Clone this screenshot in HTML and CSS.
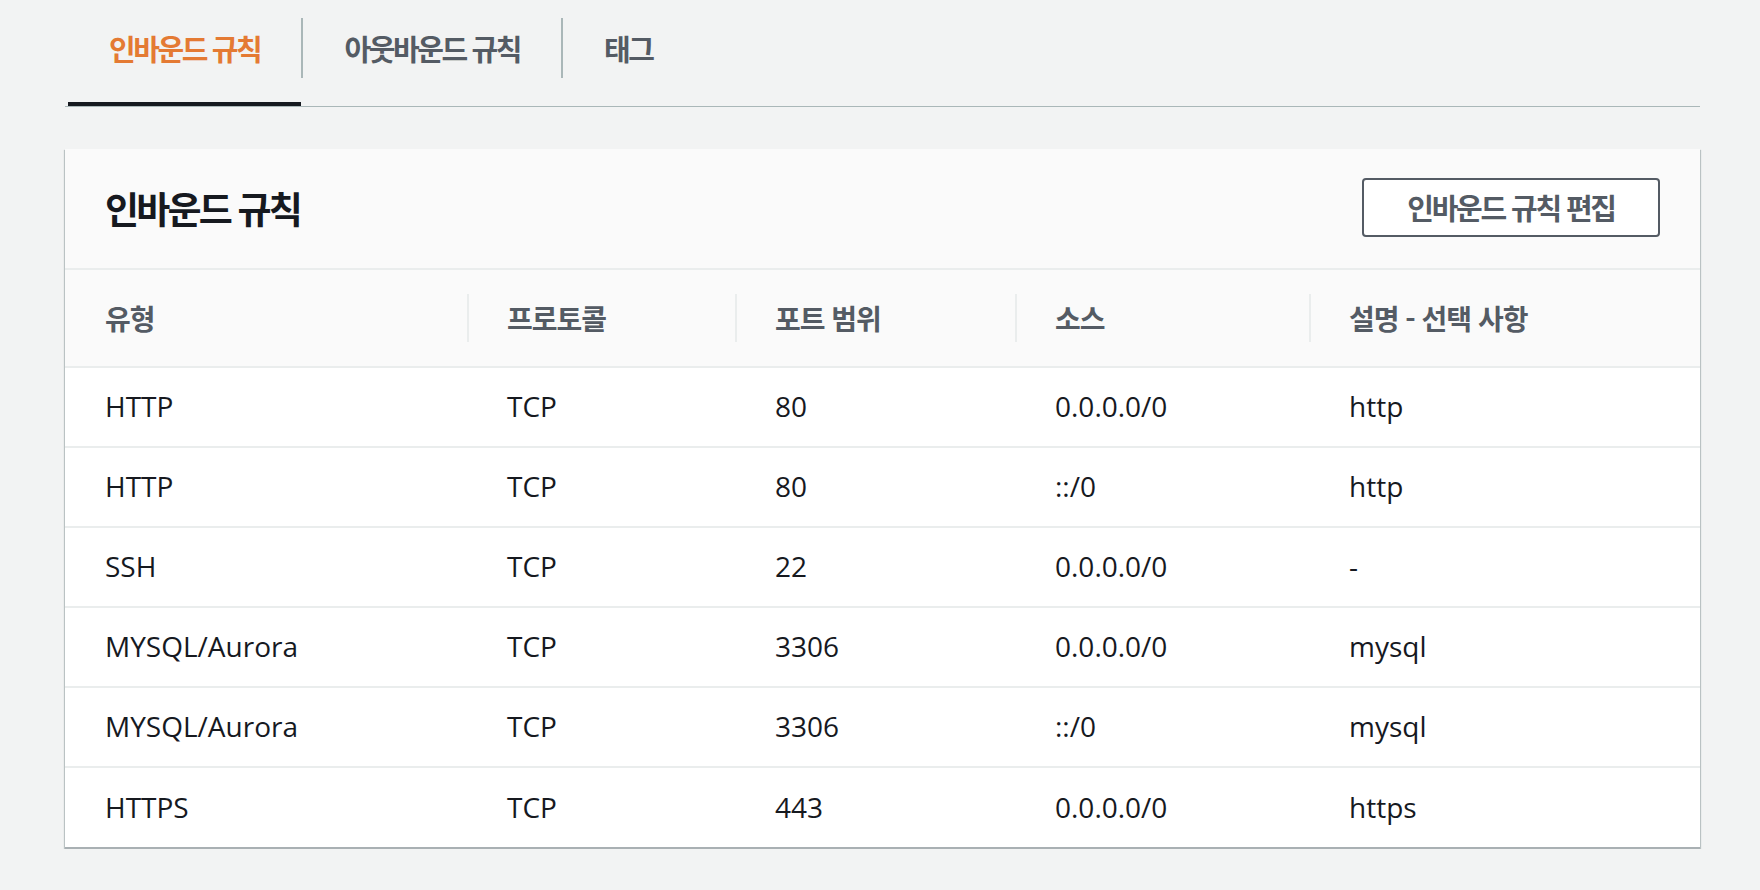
FILE: index.html
```html
<!DOCTYPE html>
<html lang="ko">
<head>
<meta charset="utf-8">
<title>인바운드 규칙</title>
<link rel="stylesheet" href="styles.css">
</head>
<body>
<div class="page">
  <nav class="tabs">
    <div class="tab active"><span class="tab-label">인바운드 규칙</span></div>
    <div class="tab"><span class="tab-label sep">아웃바운드 규칙</span></div>
    <div class="tab"><span class="tab-label sep">태그</span></div>
  </nav>

  <section class="card">
    <header class="card-header">
      <h2 class="card-title">인바운드 규칙</h2>
      <button class="btn">인바운드 규칙 편집</button>
    </header>
    <div class="table">
      <div class="row head">
        <div class="cell">유형</div>
        <div class="cell">프로토콜</div>
        <div class="cell">포트 범위</div>
        <div class="cell">소스</div>
        <div class="cell">설명 - 선택 사항</div>
      </div>
      <div class="row">
        <div class="cell">HTTP</div>
        <div class="cell">TCP</div>
        <div class="cell">80</div>
        <div class="cell">0.0.0.0/0</div>
        <div class="cell">http</div>
      </div>
      <div class="row">
        <div class="cell">HTTP</div>
        <div class="cell">TCP</div>
        <div class="cell">80</div>
        <div class="cell">::/0</div>
        <div class="cell">http</div>
      </div>
      <div class="row">
        <div class="cell">SSH</div>
        <div class="cell">TCP</div>
        <div class="cell">22</div>
        <div class="cell">0.0.0.0/0</div>
        <div class="cell">-</div>
      </div>
      <div class="row">
        <div class="cell">MYSQL/Aurora</div>
        <div class="cell">TCP</div>
        <div class="cell">3306</div>
        <div class="cell">0.0.0.0/0</div>
        <div class="cell">mysql</div>
      </div>
      <div class="row">
        <div class="cell">MYSQL/Aurora</div>
        <div class="cell">TCP</div>
        <div class="cell">3306</div>
        <div class="cell">::/0</div>
        <div class="cell">mysql</div>
      </div>
      <div class="row">
        <div class="cell">HTTPS</div>
        <div class="cell">TCP</div>
        <div class="cell">443</div>
        <div class="cell">0.0.0.0/0</div>
        <div class="cell">https</div>
      </div>
    </div>
  </section>
</div>
</body>
</html>
```

FILE: styles.css
```css
html, body {
  margin: 0;
  padding: 0;
  background: #f2f3f3;
  font-family: "Open Sans", "Noto Sans CJK KR", sans-serif;
}

.page {
  padding: 0 60px 0 65px;
}

/* Tabs */
.tabs {
  display: flex;
  padding-left: 3px;
  border-bottom: 1px solid #aab7b8;
}

.tab {
  height: 106px;
  box-sizing: border-box;
  padding-top: 18px;
  border-bottom: 4px solid transparent;
}

.tab.active {
  border-bottom-color: #16191f;
}

.tab-label {
  display: flex;
  align-items: center;
  height: 60px;
  padding: 0 41px;
  font: 700 29px/1 "Noto Sans CJK KR", sans-serif;
  letter-spacing: -2.4px;
  color: #545b64;
}

.tab.active .tab-label {
  color: #e47a33;
}

.tab-label.sep {
  border-left: 2px solid #aab7b8;
}

/* Card */
.card {
  margin-top: 42px;
  background: #ffffff;
  border-bottom: 2px solid #a9b0b3;
  box-shadow: 0 1px 1px 0 rgba(0, 28, 36, 0.2),
              1px 1px 1px 0 rgba(0, 28, 36, 0.2),
              -1px 1px 1px 0 rgba(0, 28, 36, 0.2);
}

.card-header {
  display: flex;
  align-items: center;
  justify-content: space-between;
  height: 119px;
  padding: 0 40px 0 40px;
  background: #fafafa;
  border-bottom: 2px solid #eaeded;
}

.card-title {
  margin: 0;
  font: 700 37px/1 "Noto Sans CJK KR", sans-serif;
  letter-spacing: -2.8px;
  color: #16191f;
}

.btn {
  width: 298px;
  height: 59px;
  margin-top: -2px;
  box-sizing: border-box;
  border: 2px solid #545b64;
  border-radius: 4px;
  background: #ffffff;
  font: 700 29px/1 "Noto Sans CJK KR", sans-serif;
  letter-spacing: -2.2px;
  color: #545b64;
  padding: 0;
}

/* Table */
.row {
  display: grid;
  grid-template-columns: 402px 268px 280px 294px 1fr;
  align-items: center;
  height: 78px;
  border-top: 2px solid #eaeded;
}

.row:last-child {
  height: 79px;
}

.row.head {
  height: 96px;
  border-top: none;
  background: #fafafa;
}

.cell {
  padding-left: 40px;
  font-size: 28px;
  line-height: 1.2;
  color: #16191f;
  white-space: nowrap;
}

.head .cell {
  display: flex;
  align-items: center;
  height: 48px;
  font: 700 28px/1 "Noto Sans CJK KR", sans-serif;
  letter-spacing: -1px;
  color: #545b64;
}

.head .cell + .cell {
  border-left: 2px solid #eaeded;
  padding-left: 38px;
}
```
